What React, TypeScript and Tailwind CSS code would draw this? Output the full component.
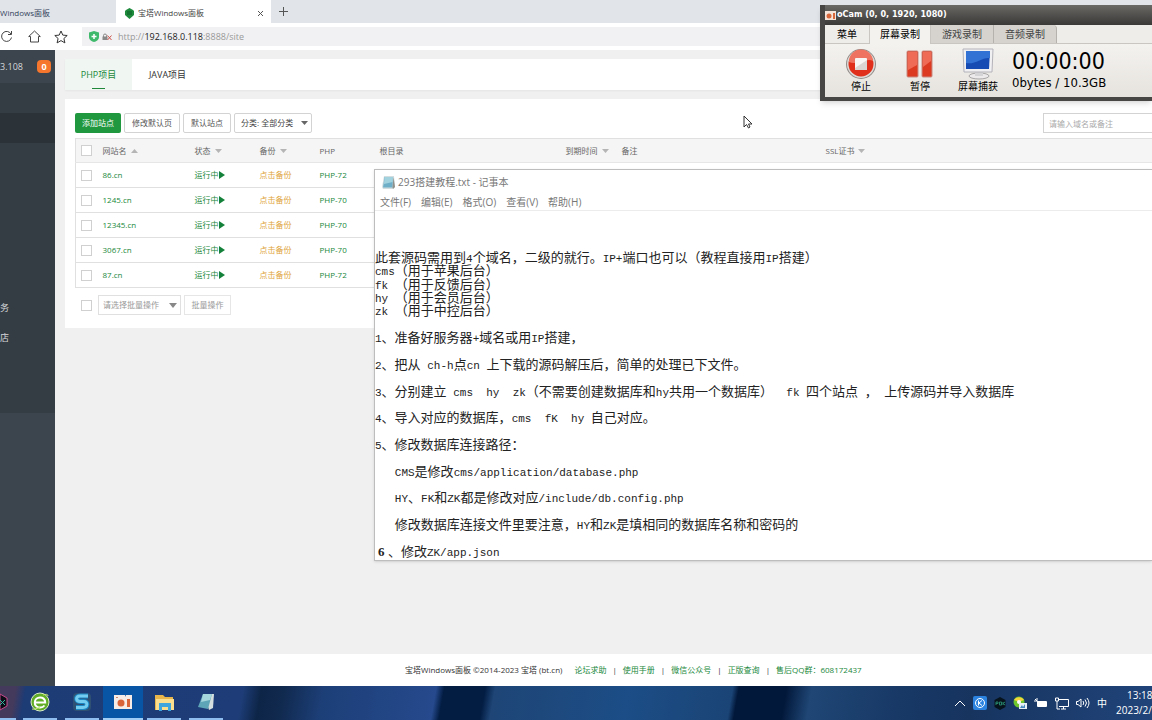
import type { ReactNode } from 'react';

const sites = [
  { name: '86.cn', php: 'PHP-72' },
  { name: '1245.cn', php: 'PHP-70' },
  { name: '12345.cn', php: 'PHP-70' },
  { name: '3067.cn', php: 'PHP-70' },
  { name: '87.cn', php: 'PHP-72' },
];

const noteLines = [
  '此套源码需用到4个域名，二级的就行。IP+端口也可以（教程直接用IP搭建）',
  'cms（用于苹果后台）',
  'fk （用于反馈后台）',
  'hy （用于会员后台）',
  'zk （用于中控后台）',
  '',
  '1、准备好服务器+域名或用IP搭建，',
  '',
  '2、把从 ch-h点cn 上下载的源码解压后，简单的处理已下文件。',
  '',
  '3、分别建立 cms  hy  zk（不需要创建数据库和hy共用一个数据库）  fk 四个站点 ， 上传源码并导入数据库',
  '',
  '4、导入对应的数据库，cms  fK  hy 自己对应。',
  '',
  '5、修改数据库连接路径：',
  '',
  '   CMS是修改cms/application/database.php',
  '',
  '   HY、FK和ZK都是修改对应/include/db.config.php',
  '',
  '   修改数据库连接文件里要注意，HY和ZK是填相同的数据库名称和密码的',
  '',
];

const menuItems = ['', '', '', '', '', '', '', '务', '店', '', ''];

function Caret({ up = false }: { up?: boolean }) {
  return (
    <svg viewBox="0 0 7 4" className="ml-1 inline-block h-1 w-[7px] fill-[#b5b5b5]" aria-hidden="true">
      <path d={up ? 'M0 4 3.500 0 7 4z' : 'M0 0h7L3.500 4z'} />
    </svg>
  );
}

function Check({ label }: { label: string }) {
  return (
    <input
      type="checkbox"
      aria-label={label}
      className="block h-[11px] w-[11px] appearance-none border border-[#d0d0d0] bg-white"
    />
  );
}

function BrowserTabs() {
  return (
    <div className="flex h-[23px] flex-shrink-0 items-stretch bg-[#e1e5ea] text-[8px] text-[#444]">
      <button className="flex w-[116px] items-center pt-[3px] text-[#34425c]">Windows面板</button>
      <div className="flex w-[155px] items-center bg-white pl-[9px] pr-[7px] pt-[3px]">
        <svg viewBox="0 0 9 11" className="mr-1 h-[11px] w-[9px]" aria-hidden="true">
          <path d="M1 2 4.500 0 8 2l1 1v4L4.500 11 0 7V3z" fill="#1d8a3c" />
          <path d="M2 4h5M2 6h5" stroke="#0c5c24" />
        </svg>
        <button className="flex-1 text-left">宝塔Windows面板</button>
        <button aria-label="关闭标签">
          <svg viewBox="0 0 7 7" className="h-[7px] w-[7px] stroke-[#555]" aria-hidden="true">
            <path d="m1 1 5 5M6 1 1 6" />
          </svg>
        </button>
      </div>
      <button className="flex w-6 items-center justify-center" aria-label="新建标签">
        <svg viewBox="0 0 9 9" className="h-[9px] w-[9px] stroke-[#555]" aria-hidden="true">
          <path d="M4.500 0v9M0 4.500h9" />
        </svg>
      </button>
    </div>
  );
}

function AddressBar() {
  return (
    <div className="flex h-[27px] flex-shrink-0 items-center bg-white">
      <button className="w-[13px]" aria-label="刷新">
        <svg viewBox="0 0 13 13" className="h-[13px] w-[13px] fill-none stroke-[#444]" aria-hidden="true">
          <path d="M11 4A5 5 0 1 0 11.500 7.500M11.500 1v3.500H8" />
        </svg>
      </button>
      <button className="ml-[15px]" aria-label="主页">
        <svg viewBox="0 0 13 13" className="h-[13px] w-[13px] fill-none stroke-[#444]" aria-hidden="true">
          <path d="M.7 6.500 6.500 1l5.800 5.500H10.500V12h-8V6.500z" />
        </svg>
      </button>
      <button className="ml-[13px]" aria-label="收藏">
        <svg viewBox="0 0 14 14" className="h-[14px] w-[14px] fill-none stroke-[#333]" aria-hidden="true">
          <path d="m7 1 1.800 4.100 4.400.4-3.300 3 1 4.400L7 10.600l-3.900 2.300 1-4.400-3.300-3 4.400-.4z" />
        </svg>
      </button>
      <div className="ml-[14px] flex h-[19px] flex-1 items-center bg-[#f1f1f3] pl-[7px]">
        <svg viewBox="0 0 10 11" className="h-[11px] w-[10px]" aria-hidden="true">
          <path d="M0 1.500 5 0l5 1.500V6c0 3-3 4.500-5 5-2-.5-5-2-5-5z" fill="#3fba6c" />
          <path d="M5 3v5M2.500 5.500h5" stroke="#fff" strokeWidth="1.500" />
        </svg>
        <svg viewBox="0 0 10 8" className="ml-[3px] h-2 w-[10px] fill-none" aria-hidden="true">
          <path d="M1.500 4V2.500a1.500 1.500 0 0 1 3 0V4" stroke="#888" />
          <path d="M.5 3.500h5V7h-5z" fill="#888" />
          <path d="m5.500 2.500 4 4.500m0-4.500-4 4.500" stroke="#c9524b" />
        </svg>
        <span className="ml-[6px] text-[9px] text-[#999]">
          http://<span className="text-[#222]">192.168.0.118</span>:8888/site
        </span>
      </div>
    </div>
  );
}

function Sidebar() {
  return (
    <nav className="w-[55px] flex-shrink-0 bg-[#3c444d] text-[9px] text-[#d5d8db]">
      <div className="flex h-[33px] items-center justify-between pr-1">
        <span>3.108</span>
        <span className="flex h-[13px] w-[14px] items-center justify-center rounded bg-[#f5762c] font-bold text-white">
          0
        </span>
      </div>
      <ul className="bg-[#353d44]">
        {menuItems.map((item, i) => (
          <li key={i} className={i === 1 ? 'h-[30px] bg-[#2b3238]' : 'flex h-[30px] items-center'}>
            {item && <a href="#">{item}</a>}
          </li>
        ))}
      </ul>
    </nav>
  );
}

function OutlineButton({ children }: { children: ReactNode }) {
  return (
    <button className="h-5 whitespace-nowrap rounded-[2px] border border-[#d3d3d3] bg-white px-[7px] text-[#555]">
      {children}
    </button>
  );
}

function SiteTable() {
  return (
    <table className="w-full table-fixed border-collapse border border-r-0 border-[#e0e0e0] text-left">
      <colgroup>
        <col className="w-[27px]" />
        <col className="w-[92px]" />
        <col className="w-[65px]" />
        <col className="w-[60px]" />
        <col className="w-[60px]" />
        <col className="w-[186px]" />
        <col className="w-[56px]" />
        <col className="w-[204px]" />
        <col />
      </colgroup>
      <thead>
        <tr className="h-6 border-b border-[#e6e6e6] bg-[#f5f5f5] text-[#666] [&>th]:p-0 [&>th]:font-normal">
          <th className="!pl-[5px]"><Check label="全选" /></th>
          <th>网站名<Caret up /></th>
          <th>状态<Caret /></th>
          <th>备份<Caret /></th>
          <th>PHP</th>
          <th>根目录</th>
          <th className="whitespace-nowrap">到期时间<Caret /></th>
          <th>备注</th>
          <th>SSL证书<Caret /></th>
        </tr>
      </thead>
      <tbody>
        {sites.map((site) => (
          <tr key={site.name} className="h-[25px] border-b border-[#e0e0e0] text-[#20883a] [&>td]:p-0">
            <td className="!pl-[5px]"><Check label={site.name} /></td>
            <td><a href="#">{site.name}</a></td>
            <td>
              <a href="#" className="flex items-center">
                运行中
                <svg viewBox="0 0 6 8" className="h-2 w-[6px] fill-[#14813a]" aria-hidden="true">
                  <path d="M0 0 6 4 0 8z" />
                </svg>
              </a>
            </td>
            <td><a href="#" className="text-[#e0a53c]">点击备份</a></td>
            <td><a href="#">{site.php}</a></td>
            <td colSpan={4} />
          </tr>
        ))}
      </tbody>
    </table>
  );
}

function SitePanel() {
  return (
    <section className="ml-[10px] mt-[9px] bg-white pb-[13px] pl-[10px] pt-[14px] text-[8px]">
      <div className="flex items-center gap-[3px]">
        <button className="h-5 rounded-[2px] bg-[#20983f] px-[7px] text-white">添加站点</button>
        <OutlineButton>修改默认页</OutlineButton>
        <OutlineButton>默认站点</OutlineButton>
        <div className="relative">
          <select
            aria-label="分类"
            className="h-5 w-[78px] appearance-none rounded-[2px] border border-[#d3d3d3] bg-white pl-[6px] text-[#444]"
          >
            <option>分类: 全部分类</option>
          </select>
          <svg viewBox="0 0 7 4" className="pointer-events-none absolute right-1 top-2 h-1 w-[7px] fill-[#666]" aria-hidden="true">
            <path d="M0 0h7L3.500 4z" />
          </svg>
        </div>
        <input
          aria-label="搜索"
          placeholder="请输入域名或备注"
          className="ml-auto h-5 w-[109px] border border-r-0 border-[#d3d3d3] pl-[5px] outline-none placeholder:text-[#aaa]"
        />
      </div>
      <div className="mt-[5px]">
        <SiteTable />
      </div>
      <div className="mt-[7px] flex h-5 items-center pl-[6px] text-[#999]">
        <Check label="选择全部" />
        <div className="relative ml-[6px]">
          <select
            aria-label="批量操作类型"
            className="h-5 w-[83px] appearance-none border border-[#e0e0e0] bg-white pl-1 text-[#999]"
          >
            <option>请选择批量操作</option>
          </select>
          <svg viewBox="0 0 8 5" className="pointer-events-none absolute right-1 top-2 h-[5px] w-2 fill-[#888]" aria-hidden="true">
            <path d="M0 0h8L4 5z" />
          </svg>
        </div>
        <button className="ml-[3px] h-5 w-[47px] border border-[#e6e6e6]">批量操作</button>
      </div>
    </section>
  );
}

function Footer() {
  const links = ['论坛求助', '使用手册', '微信公众号', '正版查询', '售后QQ群：608172437'];
  return (
    <footer className="flex h-8 items-center whitespace-nowrap bg-white pl-[350px] text-[8px] text-[#333]">
      <span className="mr-3">宝塔Windows面板 ©2014-2023 宝塔 (bt.cn)</span>
      {links.map((link, i) => (
        <span key={link}>
          {i > 0 && <span className="mx-[6px]">|</span>}
          <a href="#" className="text-[#20883a]">{link}</a>
        </span>
      ))}
    </footer>
  );
}

function NoteLine({ text }: { text: string }) {
  // half-width runs are set smaller so that two of them fill one full-width cell
  const runs = text.split(/([\x20-\x7e]+)/).filter(Boolean);
  return (
    <p className="h-[13px] whitespace-pre leading-[13px]">
      {runs.map((run, i) =>
        /^[\x20-\x7e]/.test(run) ? (
          <span key={i} className="font-['Liberation_Mono',monospace] text-[11px]">{run}</span>
        ) : (
          run
        ),
      )}
    </p>
  );
}

function Notepad() {
  return (
    <section className="absolute left-[374px] right-0 top-[169px] border border-r-0 border-[#bdbdbd] bg-white text-[10px] text-[#777] shadow-sm">
      <header className="flex h-[25px] items-center gap-[3px] pl-[7px]">
        <svg viewBox="0 0 13 13" className="h-[13px] w-[13px]" aria-hidden="true">
          <path d="M2 0h10l1 11-2 2H1L0 11z" fill="#d3dde0" />
          <path d="M2.500 1H11l-.5 10.500H1z" fill="#6fb0c8" />
          <path d="M2.500 1H11l-.3 5-8.700 2z" fill="#a3d2df" />
          <path d="M11.500 1 13 11l-2 2-.5-1.500z" fill="#8f918a" />
        </svg>
        <h2>293搭建教程.txt - 记事本</h2>
      </header>
      <div className="flex h-4 items-center gap-[10px] border-b border-[#ececec] pl-[5px]">
        <button>文件(F)</button>
        <button>编辑(E)</button>
        <button>格式(O)</button>
        <button>查看(V)</button>
        <button>帮助(H)</button>
      </div>
      <div className="flex h-[349px] flex-col justify-between overflow-hidden pb-[2px] pt-10 text-[13px] text-[#222]">
        {noteLines.map((line, i) => (
          <NoteLine key={i} text={line} />
        ))}
        <p className="h-[13px] whitespace-pre pl-[3px] leading-[13px]">
          <b className="font-['Liberation_Serif',serif]">6</b> 、修改
          <span className="font-['Liberation_Mono',monospace] text-[11px]">ZK/app.json</span>
        </p>
      </div>
    </section>
  );
}

function Recorder() {
  return (
    <section className="absolute right-0 top-[5px] w-[332px] border-b-4 border-l-[5px] border-[#484644] bg-[#efedea] text-[10px] text-black shadow-md">
      <header className="flex h-5 items-center gap-[1px] bg-linear-to-b from-[#6b6966] to-[#3b3937] text-[9px] font-bold text-white">
        <svg viewBox="0 0 11 11" className="h-[11px] w-[11px]" aria-hidden="true">
          <path d="M0 1h11v9H0z" fill="#f4e4da" />
          <circle cx="4" cy="6" r="2.500" fill="#d8683c" />
          <path d="M8 3h2v6H8z" fill="#d8683c" />
        </svg>
        <h2 className="font-['DejaVu_Sans_Condensed','DejaVu_Sans',sans-serif]">oCam (0, 0, 1920, 1080)</h2>
      </header>
      <div className="flex h-[19px] border-b border-[#c9c6c1] bg-[#efedea]">
        <button className="w-11">菜单</button>
        <button className="-mb-px w-[62px] border-x border-[#c9c6c1] bg-[#f4f2ef]">屏幕录制</button>
        <button className="w-[63px] border-r border-[#b5b2ad] bg-[#d6d3cf] text-[#444]">游戏录制</button>
        <button className="w-[63px] rounded-tr border-r border-[#b5b2ad] bg-[#d6d3cf] text-[#444]">音频录制</button>
      </div>
      <div className="flex h-[53px] items-start bg-linear-to-b from-[#f4f2ef] to-[#e6e3de] pt-1">
        <button className="flex w-[72px] flex-col items-center">
          <svg viewBox="0 0 32 32" className="h-8 w-8" aria-hidden="true">
            <circle cx="16" cy="16" r="15" fill="#8f8a87" />
            <circle cx="16" cy="16" r="14" fill="#dedad7" />
            <circle cx="16" cy="16" r="12.500" fill="#e02f1a" />
            <path d="M4 14a12 12 0 0 1 24-1C22 9 12 18 4 14z" fill="#ee7461" />
            <rect x="10" y="10" width="12" height="12" rx="1" fill="#f8f6f5" />
            <path d="M10 20 22 12v10H10z" fill="#dcd6d3" />
          </svg>
          <span className="leading-3">停止</span>
        </button>
        <button className="flex w-[46px] flex-col items-center">
          <svg viewBox="0 0 28 32" className="h-8 w-7" aria-hidden="true">
            <rect x="1" y="3" width="11" height="26" rx="1" fill="#dc3b22" stroke="#c98a80" />
            <rect x="16" y="3" width="10" height="26" rx="1" fill="#dc3b22" stroke="#c98a80" />
            <path d="M2 4h9v13l-9 5zM17 4h8v9l-8 6z" fill="#ef6b56" />
          </svg>
          <span className="leading-3">暂停</span>
        </button>
        <button className="flex w-[70px] flex-col items-center">
          <svg viewBox="0 0 32 32" className="h-8 w-8" aria-hidden="true">
            <ellipse cx="17" cy="28" rx="10" ry="3" fill="#eceaea" stroke="#a8a6a6" />
            <path d="M13 22h8v6h-8z" fill="#d4d3d6" />
            <path d="M1 1h30l-1 23H2z" fill="#f0f0f3" stroke="#b4b3b9" />
            <path d="M4 3h24l-1 18H4z" fill="#164bb4" />
            <path d="M4 3h24v7C20 9 13 17 4 15z" fill="#3272d4" />
          </svg>
          <span className="leading-3">屏幕捕获</span>
        </button>
        <div className="-ml-px font-['DejaVu_Sans_Condensed','DejaVu_Sans',sans-serif]">
          <p className="text-[23px] leading-[26px]">00:00:00</p>
          <p className="text-[13px] leading-[18px]">0bytes / 10.3GB</p>
        </div>
      </div>
    </section>
  );
}

function TaskButton({ label, active = false, children }: { label: string; active?: boolean; children: ReactNode }) {
  return (
    <button
      aria-label={label}
      className={
        active
          ? 'flex h-full w-10 items-center justify-center border-b-2 border-[#9fcdf5] bg-[#0855a6]'
          : 'flex h-full w-[34px] items-center justify-center border-b-2 border-[#8fbdf0]'
      }
    >
      {children}
    </button>
  );
}

function Taskbar() {
  return (
    <footer className="flex h-[34px] flex-shrink-0 items-center bg-[linear-gradient(100deg,#443a5c_0,#443a5c_16px,#1d3b75_26px,#1e3d78_240px,#0d2547_258px,#10294e_280px,#1d3f78_320px,#25498c_430px,#021c42_438px,#021c42_478px,#1e4576_488px,#1c4d86_620px,#1a4476_722px,#02183a_728px,#02183a_775px,#1f4675_800px,#173764_900px,#17345f_960px,#20447a_100%)] text-white">
      <button aria-label="远程工具" className="flex h-full w-4 items-center overflow-hidden border-b-2 border-[#8fbdf0]">
        <svg viewBox="0 0 8 18" className="h-[18px] w-2" aria-hidden="true">
          <path d="M0 1 7 5v8l-7 4z" fill="#0a0d16" stroke="#c74a8b" />
          <path d="m0 7 5 5M5 7l-5 5" stroke="#35b59e" />
        </svg>
      </button>
      <div className="ml-[7px] flex h-full gap-2">
        <TaskButton label="浏览器">
          <svg viewBox="0 0 20 20" className="h-5 w-5 fill-none" aria-hidden="true">
            <circle cx="10" cy="10" r="9" fill="#62ad28" stroke="#dcecc8" />
            <path d="M5 10.500h10.200c0-7-10.400-6.500-10.400 0 0 5.500 7 6.500 9.700 3" stroke="#fff" strokeWidth="2" />
            <path d="M2 17C4 18 8 16 10 15M13 3c3-1 5-1 5 1" stroke="#c4e86e" />
          </svg>
        </TaskButton>
        <TaskButton label="搜狗">
          <svg viewBox="0 0 20 20" className="h-5 w-5 fill-none" aria-hidden="true">
            <rect x="1" y="1" width="18" height="18" rx="4" fill="#2f5073" />
            <path d="M16 4H8C3 4 4 9.500 8 9.500h4c4 0 4 6-1 6H4" stroke="#1b86c4" strokeWidth="5" />
            <path d="M16 4H8C3 4 4 9.500 8 9.500h4c4 0 4 6-1 6H4" stroke="#74cdf0" strokeWidth="3" />
          </svg>
        </TaskButton>
      </div>
      <div className="ml-1 flex h-full gap-1">
        <TaskButton label="oCam" active>
          <svg viewBox="0 0 18 16" className="h-4 w-[18px]" aria-hidden="true">
            <path d="M0 1h11l1 2V1h6v14H0z" fill="#f7ece6" />
            <circle cx="7" cy="9" r="3.500" fill="#d9643a" />
            <path d="M13 5h3v8h-3z" fill="#d9643a" />
            <path d="M2 3h2v1H2z" fill="#c98970" />
          </svg>
        </TaskButton>
        <TaskButton label="文件资源管理器">
          <svg viewBox="0 0 19 17" className="h-[17px] w-[19px]" aria-hidden="true">
            <path d="M0 1h8l2 2h8v13H0z" fill="#e8b64a" />
            <path d="M1 5h18v11H1z" fill="#fbdf8f" />
            <path d="M4 9h12v8h-3v-4H7v4H4z" fill="#3fa5dc" />
          </svg>
        </TaskButton>
      </div>
      <div className="ml-2 flex h-full">
        <TaskButton label="记事本">
          <svg viewBox="0 0 18 18" className="h-[18px] w-[18px]" aria-hidden="true">
            <path d="M7 1h10l-1 14-4 2z" fill="#d5dfdf" />
            <path d="M6 1h9l-4 15-10-2z" fill="#5fa5b8" />
            <path d="M6 1h9l-2 6-9 2z" fill="#a6d6dd" />
          </svg>
        </TaskButton>
      </div>
      <div className="ml-auto flex items-center gap-[7px]">
        <svg viewBox="0 0 12 7" className="h-[7px] w-3 fill-none stroke-white" aria-hidden="true">
          <path d="m1 6 5-5 5 5" />
        </svg>
        <svg viewBox="0 0 14 14" className="h-[14px] w-[14px] fill-none" aria-hidden="true">
          <rect width="14" height="14" rx="2" fill="#2b83df" />
          <circle cx="7" cy="7" r="4.500" stroke="#fff" />
          <path d="M5.500 4.500v5M9 4.500 6 7l3 2.500" stroke="#fff" />
        </svg>
        <svg viewBox="0 0 12 13" className="h-[13px] w-3 fill-none" aria-hidden="true">
          <path d="m6 0 5.500 3v7L6 13 .5 10V3z" fill="#07131c" />
          <path d="M2 8V5h2v1.500H2M5.500 5h2v3h-2zM9 5v3m2-3-2 1.500L11 8" stroke="#258068" />
        </svg>
        <svg viewBox="0 0 14 14" className="h-[14px] w-[14px]" aria-hidden="true">
          <circle cx="6" cy="6" r="5.500" fill="#6ec62e" />
          <path d="M1 4a6 6 0 0 1 10 0L6 6z" fill="#f5d33c" />
          <circle cx="6" cy="6" r="2" fill="#fff" />
          <path d="M6 7h8v6H6z" fill="#e8f0f5" />
          <path d="m7 12 2-3 1 2 2-3v4z" fill="#4287be" />
        </svg>
        <svg viewBox="0 0 14 10" className="h-[10px] w-[14px] fill-none stroke-white" aria-hidden="true">
          <path d="M3.500 3.500h9v5h-9zM1 1l3 3M3 0v3H0" />
          <path d="M4 4h8v4H4z" fill="#fff" />
        </svg>
        <svg viewBox="0 0 14 13" className="h-[13px] w-[14px] fill-none stroke-white" aria-hidden="true">
          <path d="M4 2.500h9.500v7H4M8.500 9.500V12M6 12h5M.5 1h3v3h-3zM2 4v8h3" />
        </svg>
        <svg viewBox="0 0 14 12" className="h-3 w-[14px] fill-none stroke-white" aria-hidden="true">
          <path d="M.5 4.500H2L5 2v8L2 7.500H.5zM7 4q1.500 2 0 4M9 2.500q3 3.500 0 7M11 1q4 5 0 10" />
        </svg>
        <span className="text-[10px]">中</span>
        <div className="ml-[2px] w-9 whitespace-nowrap text-[10px] leading-[15px]">
          <p className="pl-[11px]">13:18</p>
          <p>2023/2/</p>
        </div>
      </div>
    </footer>
  );
}

export default function App() {
  return (
    <div className="relative flex min-h-screen flex-col overflow-hidden bg-[#f0f0f0] font-['Open_Sans','Noto_Sans_CJK_SC',sans-serif]">
      <BrowserTabs />
      <AddressBar />
      <div className="flex flex-1">
        <Sidebar />
        <div className="flex min-w-0 flex-1 flex-col">
          <main className="flex-1 pt-[9px]">
            <div className="ml-[10px] flex h-[31px] bg-white text-[9px] shadow-xs">
              <button className="relative w-[67px] bg-[#f0f7f3] text-[#20883a]">
                PHP项目
                <span className="absolute bottom-[1px] left-[27px] h-[1px] w-[13px] bg-[#20883a]" />
              </button>
              <button className="w-[71px] text-[#333]">JAVA项目</button>
            </div>
            <SitePanel />
          </main>
          <Footer />
        </div>
      </div>
      <Taskbar />
      <Notepad />
      <Recorder />
      <svg viewBox="0 0 10 14" className="absolute left-[743px] top-[115px] h-[14px] w-[10px] fill-white stroke-[#333]" aria-hidden="true">
        <path d="M1 1v11l2.500-2.500L5.500 13l1.500-1-1.500-3H9z" />
      </svg>
    </div>
  );
}
